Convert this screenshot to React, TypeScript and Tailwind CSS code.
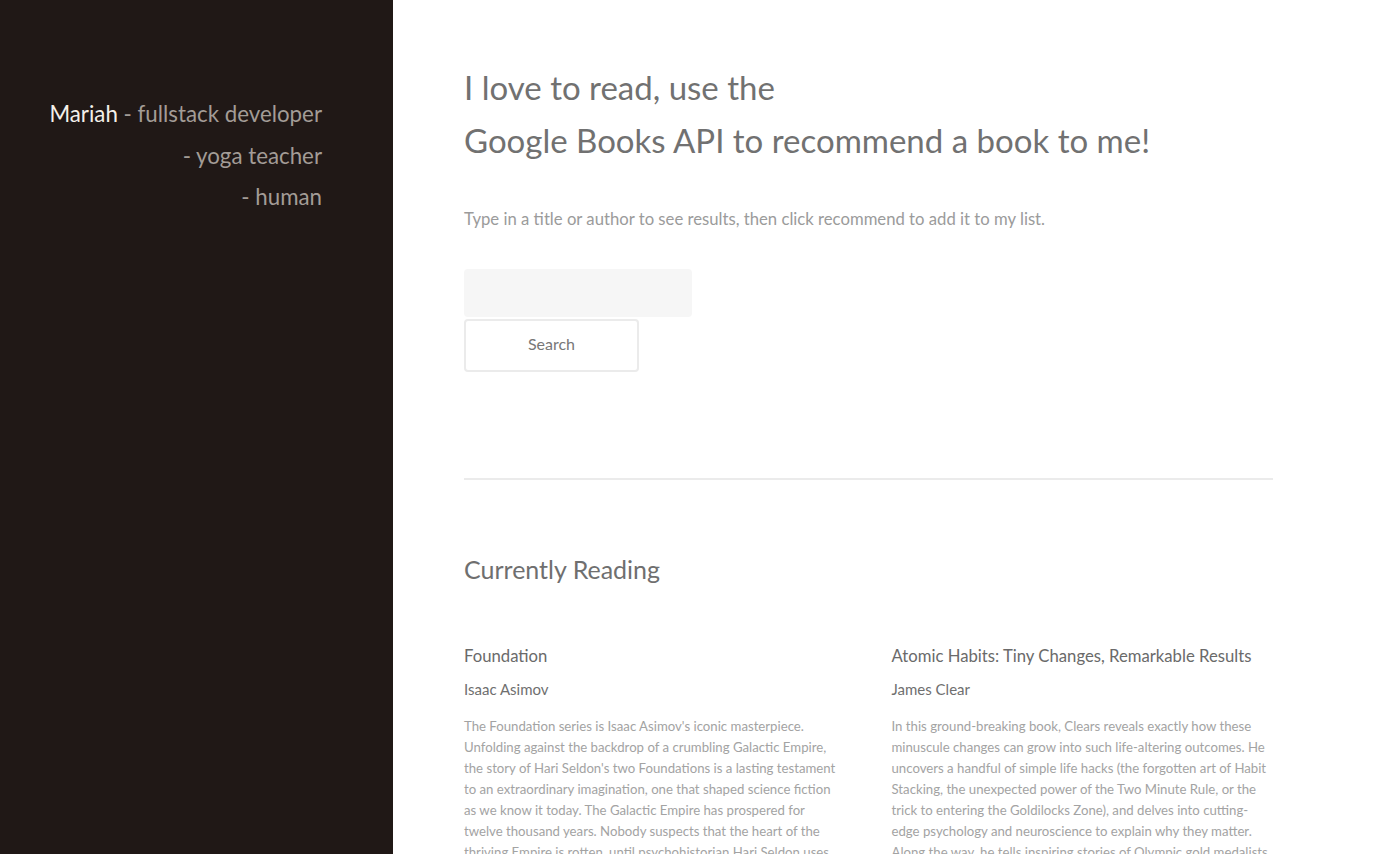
const books = [
  {
    title: "Foundation",
    author: "Isaac Asimov",
    description:
      "The Foundation series is Isaac Asimov's iconic masterpiece. Unfolding against the backdrop of a crumbling Galactic Empire, the story of Hari Seldon's two Foundations is a lasting testament to an extraordinary imagination, one that shaped science fiction as we know it today. The Galactic Empire has prospered for twelve thousand years. Nobody suspects that the heart of the thriving Empire is rotten, until psychohistorian Hari Seldon uses his new science to foresee its inevitable fall.",
  },
  {
    title: "Atomic Habits: Tiny Changes, Remarkable Results",
    author: "James Clear",
    description:
      "In this ground-breaking book, Clears reveals exactly how these minuscule changes can grow into such life-altering outcomes. He uncovers a handful of simple life hacks (the forgotten art of Habit Stacking, the unexpected power of the Two Minute Rule, or the trick to entering the Goldilocks Zone), and delves into cutting-edge psychology and neuroscience to explain why they matter. Along the way, he tells inspiring stories of Olympic gold medalists, award-winning artists, business leaders, life-saving physicians, and star comedians.",
  },
];

export default function App() {
  return (
    <div className="flex h-[854px] overflow-hidden bg-white font-['Lato',sans-serif]">
      <aside className="w-[393px] shrink-0 bg-[#201816] pt-[93px] pr-[71px] text-right text-[22.3px] leading-[41.5px] text-[#a39c96]">
        <p>
          <span className="text-[#f4f0ea]">Mariah</span> - fullstack developer
        </p>
        <p>- yoga teacher</p>
        <p>- human</p>
      </aside>

      <main className="flex-1 pl-[71px] pt-[61px]">
        <div className="w-[809px]">
          <h1 className="text-[33px] leading-[53px] text-[#717171]">
            I love to read, use the
            <br />
            Google Books API to recommend a book to me!
          </h1>
          <p className="mt-[40px] text-[16.7px] text-[#9b9b9b]">
            Type in a title or author to see results, then click recommend to add it to my list.
          </p>

          <div className="mt-[37px] flex flex-col items-start gap-[2px]">
            <input
              type="text"
              className="h-[48px] w-[228px] rounded-[4px] bg-[#f6f6f6] px-3 outline-none"
            />
            <button className="h-[53px] w-[175px] rounded-[4px] border-2 border-[#ebebeb] bg-white pb-[3px] text-[16px] text-[#777]">
              Search
            </button>
          </div>

          <hr className="mt-[106px] border-t-2 border-[#ebebeb]" />

          <h2 className="mt-[71px] text-[25px] text-[#6f6f6f]">Currently Reading</h2>

          <div className="mt-[55px] grid grid-cols-2 gap-x-[46px]">
            {books.map((b) => (
              <div key={b.title}>
                <h3 className="text-[16.7px] text-[#6a6a6a]">{b.title}</h3>
                <p className="mt-[9px] text-[15px] text-[#6f6f6f]">{b.author}</p>
                <p className="mt-[16px] text-[13.2px] leading-[21px] text-[#a3a3a3]">
                  {b.description}
                </p>
              </div>
            ))}
          </div>
        </div>
      </main>
    </div>
  );
}
